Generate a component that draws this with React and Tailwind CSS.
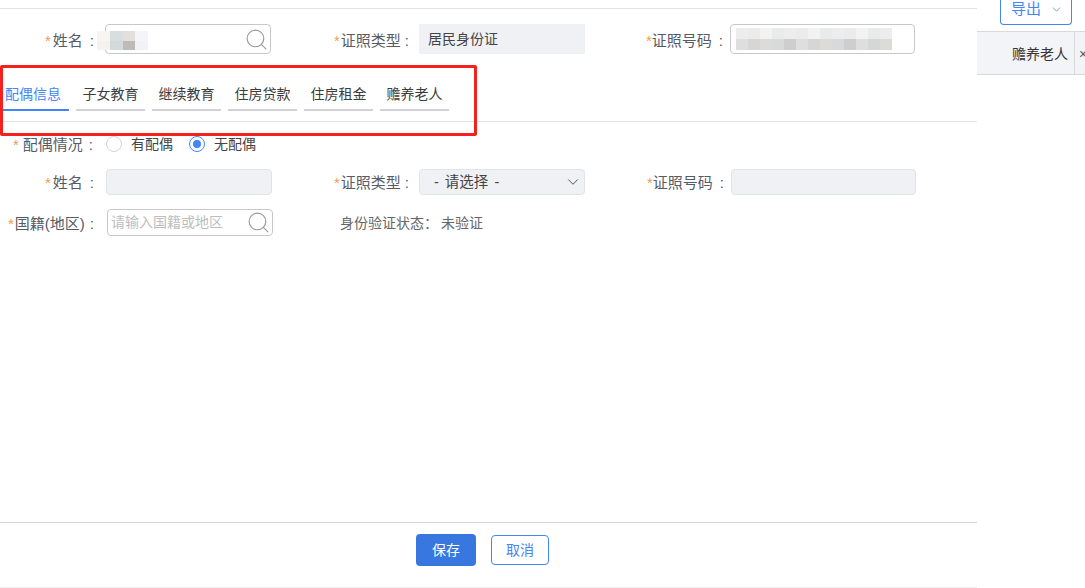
import React from 'react';
import { ChevronDown, Search } from 'lucide-react';

const tabs = ['配偶信息', '子女教育', '继续教育', '住房贷款', '住房租金', '赡养老人'];

const cn = '[font-family:"Liberation_Sans","Noto_Sans_CJK_SC",sans-serif]';

function Label({ text, className = '', colon = 'ml-[7px] mr-[7px]', star = '' }) {
  return (
    <div className={`flex items-center justify-end whitespace-nowrap pt-[2px] text-[15px] leading-[20px] text-[#555b66] ${className}`}>
      <span className={`text-[#f59a4a] ${star}`}>*</span>
      {text}
      <span className={colon}>:</span>
    </div>
  );
}

// mosaic used where the original hides personal data
function Mosaic({ cells, className = '' }) {
  return (
    <div className={`pointer-events-none absolute flex flex-col rounded-[8px] bg-[#f7f7f7] blur-[0.5px] ${className}`}>
      {cells.map((row, i) => (
        <div key={i} className="flex h-[10px] flex-1">
          {row.map((c, j) => (
            <div key={j} className="h-full flex-1" style={{ backgroundColor: c }} />
          ))}
        </div>
      ))}
    </div>
  );
}

function SearchIcon() {
  return <Search className="h-[25px] w-[25px] text-[#9a9a9a]" strokeWidth={1.1} />;
}

export default function App() {
  return (
    <div className={`relative flex h-[588px] w-[1085px] overflow-hidden bg-white ${cn}`}>
      <div className="flex w-[977px] flex-none flex-col border-b border-[#f0f0f0]">
        <div className="mt-[8px] border-t border-[#e3e3e3]" />

        {/* taxpayer row */}
        <div className="mt-[15px] grid h-[30px] grid-cols-[105px_166px_148px_166px_145px_185px]">
          <Label text="姓名" className="pt-[3px]" colon="ml-[7px] mr-[11px]" star="mr-[2px]" />
          <div className="relative flex items-center justify-end rounded-[4px] border border-[#c8c8c8] pr-[1px]">
            <SearchIcon />
            <Mosaic
              className="-left-[9px] top-[6px] h-[19px] w-[51px]"
              cells={[
                ['#f7f4f2', '#d8dee0', '#e2e0dc', '#f4f5f8'],
                ['#f5f1ee', '#d3dadd', '#bfbcb7', '#f0f2f6'],
              ]}
            />
          </div>
          <Label text="证照类型" className="pt-[3px]" colon="ml-[4px] mr-[10px]" star="mr-[1px]" />
          <div className="flex items-center bg-[#f0f1f5] pl-[9px] pt-[1px] text-[14px] text-[#444]">居民身份证</div>
          <Label text="证照号码" className="pt-[3px]" />
          <div className="relative rounded-[4px] border border-[#c8c8c8]">
            <Mosaic
              className="left-[5px] top-[3px] h-[22px] w-[156px]"
              cells={[
                Array.from({ length: 13 }, (_, i) => ['#ededed', '#ebebeb', '#f2f2f2', '#e9eaea'][i % 4]),
                Array.from({ length: 13 }, (_, i) => ['#dedede', '#d6d6d6', '#dcdbd8', '#d8d9da', '#cfcecf'][i % 5]),
              ]}
            />
          </div>
        </div>

        {/* tabs */}
        <div className="mt-[29px] flex gap-[7px] pl-[2px]">
          {tabs.map((t, i) => (
            <div
              key={t}
              className={`h-[28px] border-b-2 text-[14px] leading-[22px] ${
                i === 0 ? 'w-[67px] border-[#4285f4] pl-[3px] text-[#4285f4]' : 'w-[69px] border-[#d2d2d6] text-center text-[#3c3c3c]'
              }`}
            >
              {t}
            </div>
          ))}
        </div>
        <div className="mt-[10px] border-t border-[#e3e3e3]" />

        {/* spouse status */}
        <div className="mt-[11px] flex h-[22px] items-center">
          <Label text="配偶情况" className="w-[105px]" colon="ml-[6px] mr-[12px]" star="mr-[4px]" />
          <span className="ml-[1px] h-[16px] w-[16px] rounded-full border border-[#d4d4d4]" />
          <span className="ml-[9px] text-[14px] text-[#444]">有配偶</span>
          <span className="ml-[16px] flex h-[16px] w-[16px] items-center justify-center rounded-full border border-[#4285f4]">
            <span className="h-[8px] w-[8px] rounded-full bg-[#4285f4]" />
          </span>
          <span className="ml-[9px] text-[14px] text-[#444]">无配偶</span>
        </div>

        {/* spouse row 1 */}
        <div className="mt-[14px] grid h-[23px] grid-cols-[106px_166px_147px_166px_146px_185px]">
          <Label text="姓名" colon="ml-[7px] mr-[12px]" star="mr-[2px]" />
          <div className="rounded-[4px] border border-[#e2e3e8] bg-[#f0f1f5]" />
          <Label text="证照类型" colon="ml-[4px] mr-[10px]" star="mr-[1px]" />
          <div className="flex items-center justify-between rounded-[4px] border border-[#e2e3e8] bg-[#f0f1f5] pl-[14px] pr-[2px] text-[14.5px] text-[#444]">
            <span className="pt-[2px] [word-spacing:2px]">- 请选择 -</span>
            <ChevronDown className="h-[18px] w-[18px] text-[#333]" strokeWidth={1.1} />
          </div>
          <Label text="证照号码" />
          <div className="rounded-[4px] border border-[#e2e3e8] bg-[#f0f1f5]" />
        </div>

        {/* spouse row 2 */}
        <div className="mt-[17px] grid h-[25px] grid-cols-[107px_166px_67px_auto]">
          <Label text="国籍(地区)" colon="ml-[5px] mr-[13px]" star="mr-[1px]" />
          <div className="flex items-center justify-between rounded-[4px] border border-[#c8c8c8] pl-[3px] pr-[1px]">
            <span className="text-[14px] text-[#bdbdbd]">请输入国籍或地区</span>
            <SearchIcon />
          </div>
          <div />
          <div className="flex items-center whitespace-nowrap pt-[1px] text-[14px] text-[#666]">
            身份验证状态：
            <span className="ml-[3px]">未验证</span>
          </div>
        </div>

        {/* footer */}
        <div className="mt-auto flex h-[65px] justify-center gap-[15px] border-t border-[#d6d6d6] pr-[12px] pt-[11px]">
          <button className="h-[32px] w-[60px] rounded-[4px] bg-[#3876e0] text-[14px] text-white">保存</button>
          <button className="mt-[1px] h-[30px] w-[58px] rounded-[4px] border border-[#4285f4] text-[14px] text-[#4285f4]">取消</button>
        </div>
      </div>

      {/* table fragment on the right */}
      <div className="flex flex-1 flex-col">
        <div className="ml-[23px] flex h-[25px] w-[72px] items-center justify-between rounded-b-[4px] border border-t-0 border-[#4285f4] pb-[5px] pl-[10px] pr-[8px] text-[15px] text-[#4285f4]">
          <span>导出</span>
          <ChevronDown className="h-[13px] w-[13px]" strokeWidth={1.4} />
        </div>
        <div className="mt-[6px] flex h-[44px] items-center border-y border-[#d9d9d9] bg-[#f3f4f8]">
          <div className="flex h-full w-[98px] flex-none items-center justify-end border-r border-[#d9d9d9] pr-[6px] pt-[3px] text-[14px] text-[#333]">赡养老人</div>
          <span className="ml-[4px] pt-[3px] text-[14px] text-[#555]">×</span>
        </div>
      </div>

      {/* red annotation drawn over the screenshot */}
      <div className="absolute left-0 top-[65px] h-[71px] w-[477px] rounded-[2px] border-[3px] border-[#f5211c]" />
    </div>
  );
}
